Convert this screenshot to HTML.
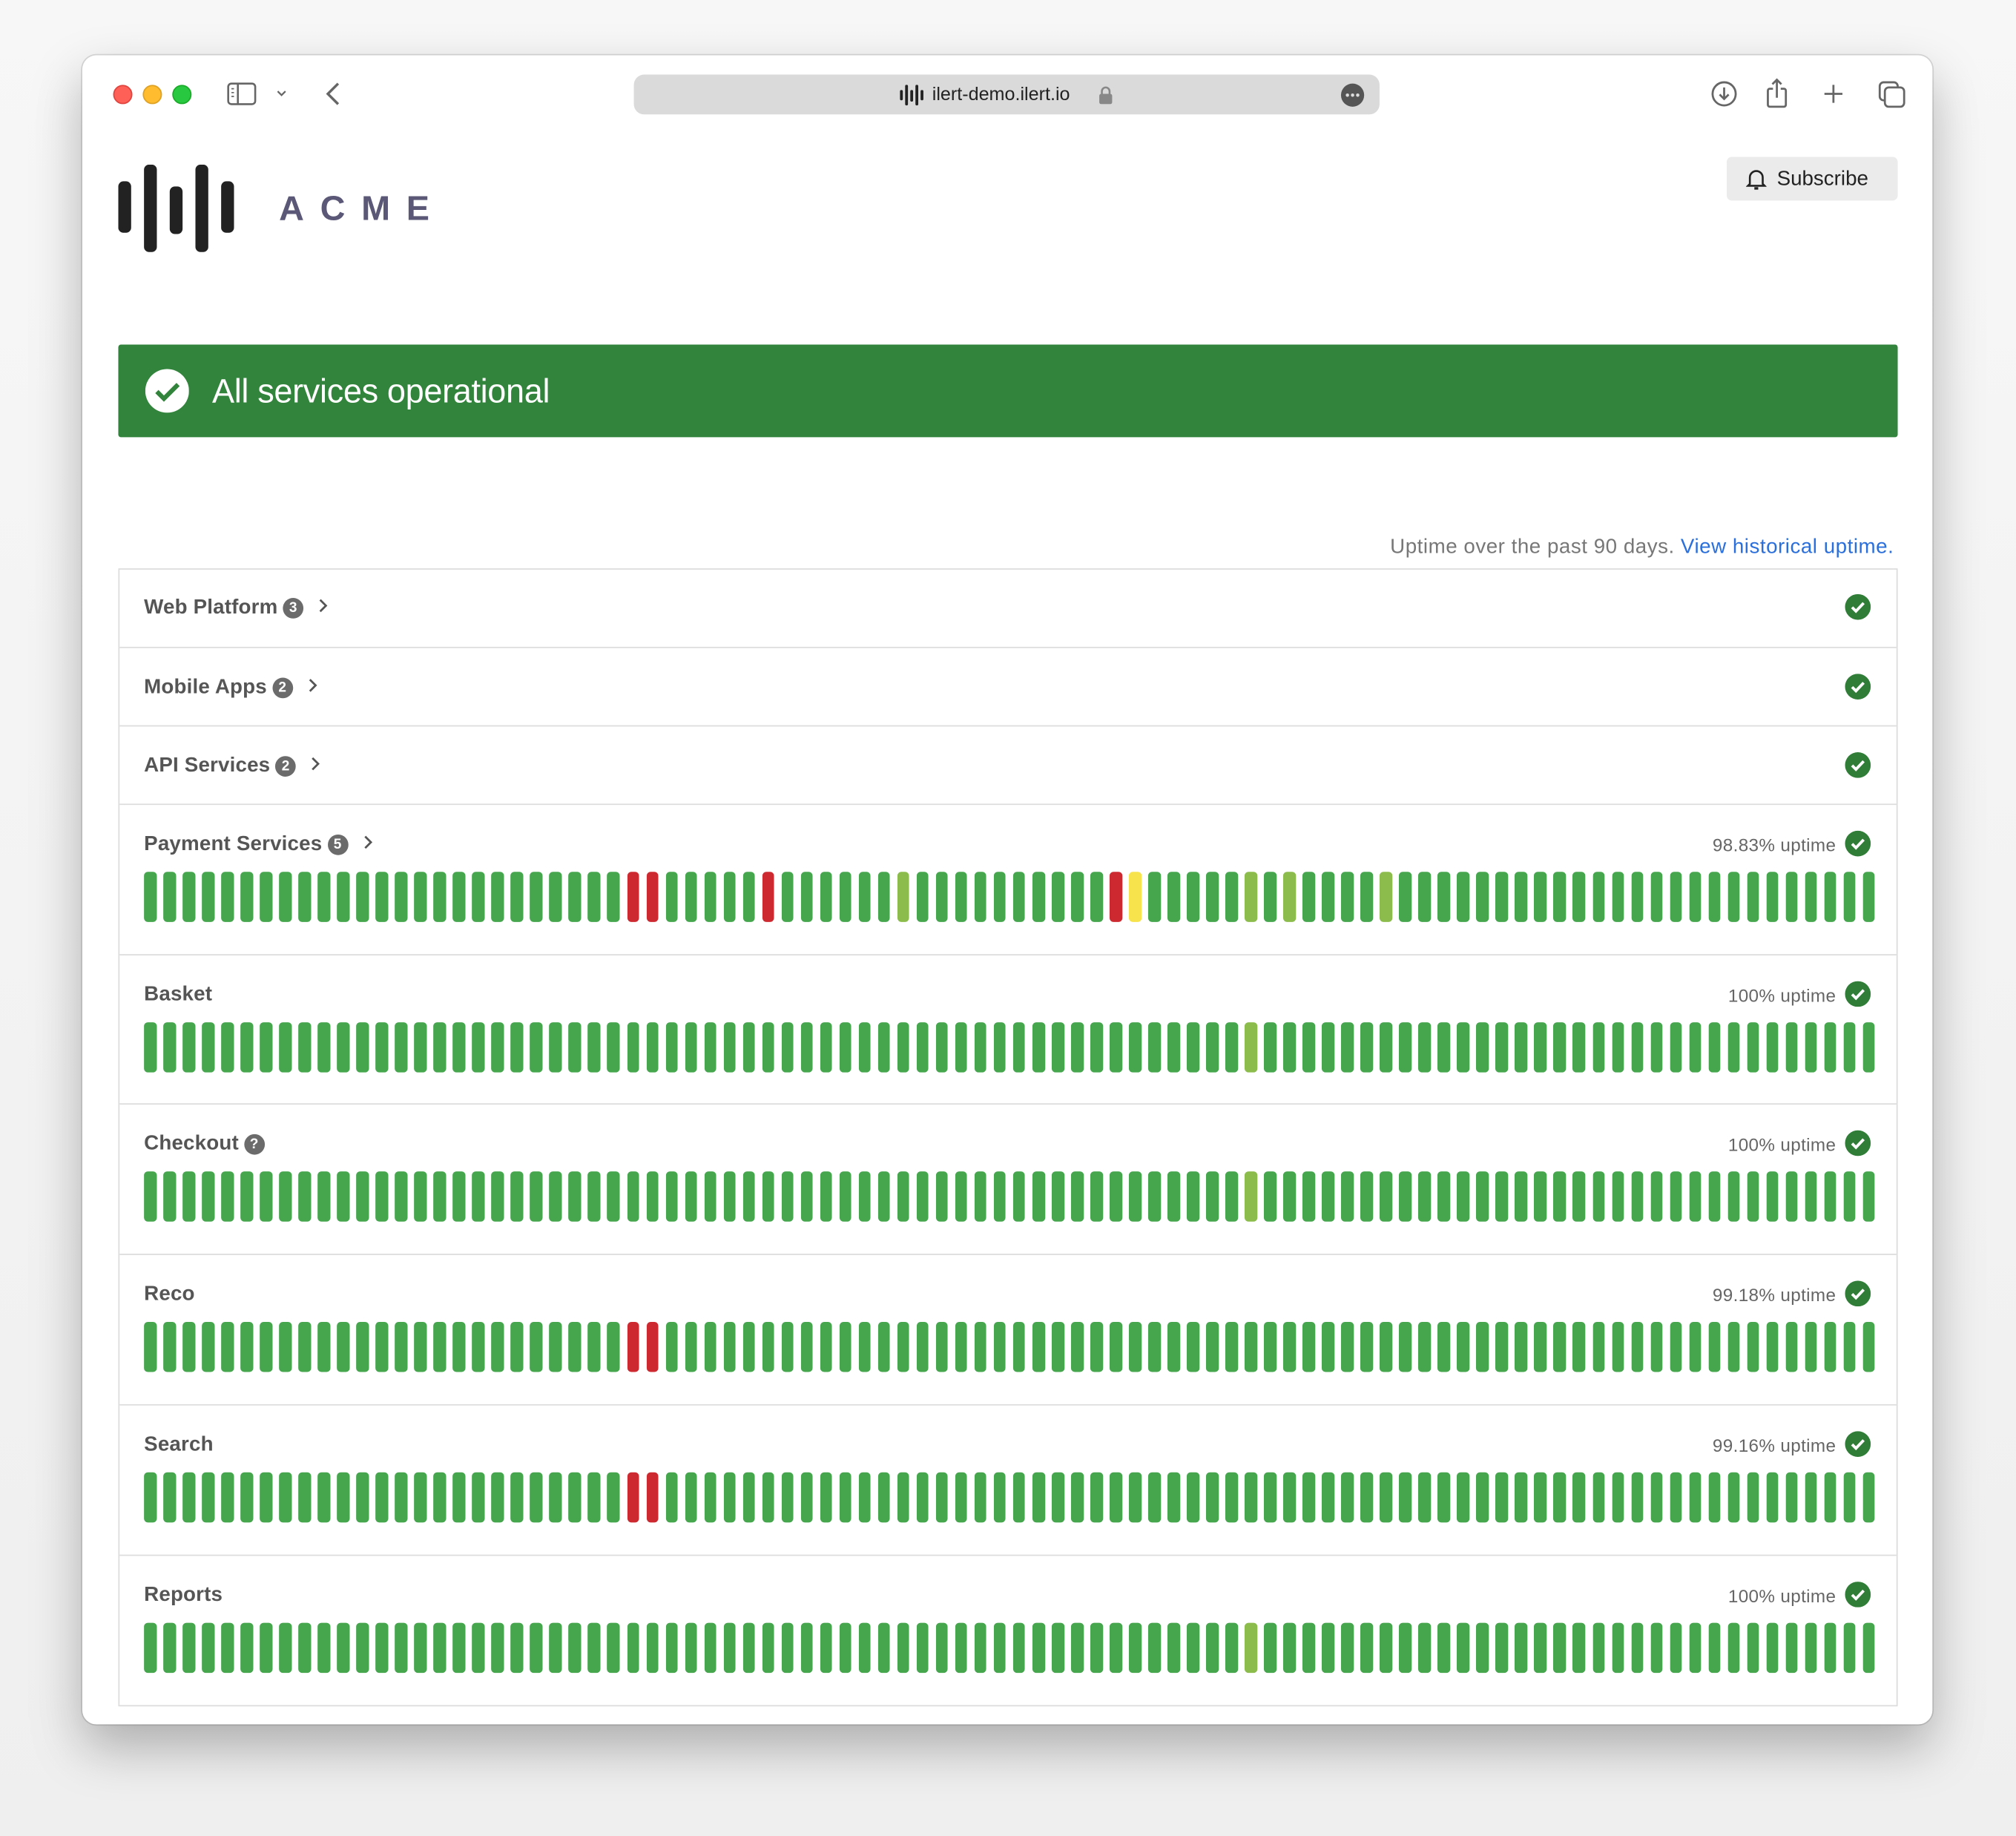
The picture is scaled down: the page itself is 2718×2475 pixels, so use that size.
<!DOCTYPE html>
<html><head><meta charset="utf-8">
<style>
html,body{margin:0;padding:0;width:2718px;height:2474px;overflow:hidden;background:#f4f4f4;font-family:"Liberation Sans",sans-serif;}
#s{position:absolute;left:0;top:0;width:1568px;height:1428px;transform:scale(1.73342);transform-origin:0 0;background:linear-gradient(#f7f7f7,#efefef);}
.win{position:absolute;left:64px;top:43px;width:1439px;height:1298px;background:#fff;border-radius:11px;box-shadow:0 18px 40px rgba(0,0,0,.28),0 0 0 1px rgba(0,0,0,.12);overflow:hidden;}
.abs{position:absolute;}
.dot{position:absolute;top:23px;width:13px;height:13px;border-radius:50%;}
.url{position:absolute;left:429px;top:15px;width:580px;height:31px;background:#dadada;border-radius:8px;}
.url span{position:absolute;left:232px;top:8px;font-size:14.5px;color:#222;}
.sub{position:absolute;left:1279px;top:79px;width:133px;height:34px;background:#ebebeb;border-radius:4px;font-size:16px;color:#222;}
.banner{position:absolute;left:28px;top:225px;width:1384px;height:72px;background:#32843c;border-radius:2px;}
.banner span{position:absolute;left:73px;top:21px;color:#fff;font-size:26px;letter-spacing:-.2px;}
.up{position:absolute;right:30px;top:374px;font-size:16px;color:#777;letter-spacing:.3px;}
.up a{color:#2a6fdb;text-decoration:none;}
.box{position:absolute;left:28px;top:399px;width:1382px;height:883px;border:1px solid #dcdcdc;}
.row{position:absolute;left:0;width:1382px;border-top:1px solid #dcdcdc;}
.t{position:absolute;left:19px;font-size:16px;color:#555;font-weight:bold;letter-spacing:.1px;}
.b{display:inline-block;width:16px;height:16px;border-radius:50%;background:#6b6b6b;color:#fff;font-size:11px;text-align:center;line-height:16px;vertical-align:1px;margin-left:4px;}
.ck{position:absolute;right:20px;}
.pct{position:absolute;right:47px;font-size:14px;color:#666;letter-spacing:.2px;}
.bars{position:absolute;left:19px;height:39px;width:1350px;}
.bars i{position:absolute;top:0;width:9.6px;height:39px;border-radius:3px;background:#45a64e;}
</style></head><body><div id="s">
<div class="win">
 <div class="dot" style="left:24px;background:#fe5f57;border:0.5px solid #e0443e"></div>
 <div class="dot" style="left:47px;background:#febc2e;border:0.5px solid #dea123"></div>
 <div class="dot" style="left:70px;background:#28c840;border:0.5px solid #1aab29"></div>
 <svg class="abs" style="left:112px;top:20px" width="60" height="20" viewBox="0 0 60 20" fill="none" stroke="#666" stroke-width="1.5"><rect x="1.5" y="2" width="21" height="16" rx="2.5"/><line x1="9" y1="2" x2="9" y2="18"/><path d="M4 6h2M4 9h2M4 12h2" stroke-width="1"/><path d="M40 8l3 3 3-3" stroke-width="1.3"/></svg>
 <svg class="abs" style="left:188px;top:20px" width="14" height="20" viewBox="0 0 14 20" fill="none" stroke="#666" stroke-width="2"><path d="M11 2L3 10l8 8"/></svg>
 <div class="url"><svg class="abs" style="left:206px;top:7px" width="20" height="18" viewBox="0 0 20 18" fill="#222"><rect x="1" y="5" width="2.2" height="8" rx="1"/><rect x="5" y="1" width="2.2" height="16" rx="1"/><rect x="9" y="5" width="2.2" height="9" rx="1"/><rect x="13" y="1" width="2.2" height="16" rx="1"/><rect x="17" y="5" width="2.2" height="8" rx="1"/></svg><span>ilert-demo.ilert.io</span>
 <svg class="abs" style="left:361px;top:9px" width="12" height="14" viewBox="0 0 12 14" fill="#888"><rect x="1" y="6" width="10" height="8" rx="1.5"/><path d="M3 6V4a3 3 0 0 1 6 0v2" fill="none" stroke="#888" stroke-width="1.5"/></svg>
 <svg class="abs" style="left:549px;top:6px" width="20" height="20" viewBox="0 0 20 20"><circle cx="10" cy="10" r="9" fill="#555"/><circle cx="6" cy="10" r="1.3" fill="#ddd"/><circle cx="10" cy="10" r="1.3" fill="#ddd"/><circle cx="14" cy="10" r="1.3" fill="#ddd"/></svg></div>
 <svg class="abs" style="left:1264px;top:16px" width="160" height="28" viewBox="0 0 160 28" fill="none" stroke="#666" stroke-width="1.6"><circle cx="13" cy="14" r="9"/><path d="M13 9v9M9.5 14.5L13 18l3.5-3.5"/><path d="M51 10h-2.5a1.5 1.5 0 0 0-1.5 1.5v11a1.5 1.5 0 0 0 1.5 1.5h11a1.5 1.5 0 0 0 1.5-1.5v-11a1.5 1.5 0 0 0-1.5-1.5H57M54 3v14M50.5 6.5L54 3l3.5 3.5"/><path d="M98 7v14M91 14h14"/><rect x="134" y="5" width="14" height="14" rx="3"/><rect x="138" y="9" width="15" height="15" rx="3" fill="#fff"/></svg>
 <svg class="abs" style="left:28px;top:85px" width="92" height="70" viewBox="0 0 92 70" fill="#222"><rect x="0" y="13" width="10" height="40" rx="4"/><rect x="20" y="0" width="10" height="68" rx="4"/><rect x="40" y="17" width="10" height="37" rx="4"/><rect x="60" y="0" width="10" height="68" rx="4"/><rect x="80" y="13" width="10" height="40" rx="4"/></svg>
 <div class="abs" style="left:153px;top:104px;font-size:27px;font-weight:bold;color:#5b5877;letter-spacing:12.5px;">ACME</div>
 <div class="sub"><svg class="abs" style="left:15px;top:9px" width="16" height="17" viewBox="0 0 16 17" fill="none" stroke="#222" stroke-width="1.5"><path d="M3 12V7a5 5 0 0 1 10 0v5l1.5 1.5h-13z"/><path d="M6.5 15.5h3" stroke-width="2"/></svg><span class="abs" style="left:39px;top:9px">Subscribe</span></div>
 <div class="banner"><svg class="abs" style="left:21px;top:19px" width="34" height="34" viewBox="0 0 34 34"><circle cx="17" cy="17" r="17" fill="#fff"/><path d="M9 17.5l5.5 5.5L25.5 12" fill="none" stroke="#32843c" stroke-width="3.5"/></svg><span>All services operational</span></div>
 <div class="up">Uptime over the past 90 days. <a>View historical uptime.</a></div>
 <div class="box" id="box"></div>
</div>
</div>
<script>
var rows=[["Web Platform","3",0,null,[]],["Mobile Apps","2",0,null,[]],["API Services","2",0,null,[]],
["Payment Services","5",1,"98.83% uptime",{25:"r",26:"r",32:"r",39:"l",50:"r",51:"y",57:"l",59:"l",64:"l"}],
["Basket",null,1,"100% uptime",{57:"l"}],["Checkout","?",1,"100% uptime",{57:"l"}],
["Reco",null,1,"99.18% uptime",{25:"r",26:"r"}],["Search",null,1,"99.16% uptime",{25:"r",26:"r"}],["Reports",null,1,"100% uptime",{57:"l"}]];
var col={r:"#cc2a30",y:"#f7e34c",l:"#8cbd4c"};
var ck='<svg width="20" height="20" viewBox="0 0 20 20"><circle cx="10" cy="10" r="10" fill="#2f7d37"/><path d="M5.5 10.3l3 3L14.5 7" fill="none" stroke="#fff" stroke-width="2.2"/></svg>';
var h="",y=-1;
rows.forEach(function(r,k){var H=r[2]?116.7:61;
 h+='<div class="row" style="top:'+y+'px;height:'+H+'px;'+(k==0?'border-top:0;':'')+'">';
 var badge=r[1]?'<span class="b">'+r[1]+'</span>':'';
 var chev=(k<4)?'<svg width="14" height="14" viewBox="0 0 14 14" style="margin-left:8px;vertical-align:-1px"><path d="M5 2.5L9.5 7 5 11.5" fill="none" stroke="#555" stroke-width="1.6"/></svg>':'';
 h+='<div class="t" style="top:22px">'+r[0]+badge+chev+'</div>';
 h+='<div class="ck" style="top:20px">'+ck+'</div>';
 if(r[3]){h+='<div class="pct" style="top:23px">'+r[3]+'</div><div class="bars" style="top:52px">';
  for(var i=0;i<90;i++){var c=r[4][i]?col[r[4][i]]:"#45a64e";h+='<i style="left:'+(i*15.02).toFixed(2)+'px;background:'+c+'"></i>';}
  h+='</div>';}
 h+='</div>';y+=H;});
document.getElementById("box").innerHTML=h;
</script>
</body></html>
